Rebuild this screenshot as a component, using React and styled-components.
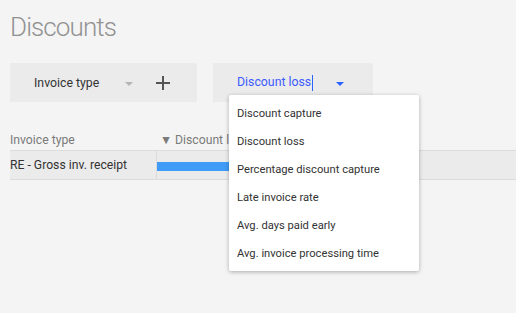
import React, { useState } from 'react'
import styled, { createGlobalStyle } from 'styled-components'

const GlobalStyle = createGlobalStyle`
  html, body {
    margin: 0;
    padding: 0;
    background: #f4f4f4;
    font-family: Roboto, "Liberation Sans", Arial, sans-serif;
  }
`

const Page = styled.div`
  position: relative;
  min-height: 313px;
  box-sizing: border-box;
  padding: 12px 0 0 10px;
`

const Title = styled.h1`
  margin: 0;
  font-size: 26px;
  font-weight: 300;
  letter-spacing: -0.9px;
  color: #929292;
  line-height: 30px;
`

const Toolbar = styled.div`
  display: flex;
  gap: 16px;
  margin-top: 21px;
`

const Picker = styled.div`
  position: relative;
  display: flex;
  align-items: center;
  box-sizing: border-box;
  width: ${({ $width }) => $width}px;
  height: 39px;
  padding-left: 24px;
  background: #ebebeb;
`

const PickerLabel = styled.span`
  font-size: 12.3px;
  color: ${({ $active }) => ($active ? '#3d5afe' : '#333')};
  width: ${({ $labelWidth }) => $labelWidth}px;
`

const Caret = styled.span`
  display: inline-block;
  width: 1px;
  height: 16px;
  background: #2962ff;
  vertical-align: middle;
  margin-left: 1px;
`

const Arrow = styled.span`
  width: 0;
  height: 0;
  border-left: 4px solid transparent;
  border-right: 4px solid transparent;
  border-top: 4px solid ${({ $color }) => $color};
  margin-top: 2px;
`

const AddButton = styled.button`
  display: flex;
  align-items: center;
  justify-content: center;
  width: 18px;
  height: 18px;
  margin-left: 21px;
  padding: 0;
  border: none;
  background: transparent;
  cursor: pointer;
`

const Menu = styled.ul`
  position: absolute;
  left: 229px;
  top: 95px;
  width: 190px;
  margin: 0;
  padding: 4px 0;
  list-style: none;
  background: #fff;
  border-radius: 2px;
  box-shadow: 0 1px 4px rgba(0, 0, 0, 0.3);
  z-index: 2;
`

const MenuItem = styled.li`
  height: 28px;
  line-height: 29px;
  padding-left: 8px;
  font-size: 11.2px;
  color: #333;
  cursor: pointer;
`

const Table = styled.div`
  margin-top: 28px;
`

const HeaderRow = styled.div`
  display: grid;
  grid-template-columns: 146px 1fr;
  height: 20px;
  align-items: center;
  font-size: 12.2px;
  color: #7a7a7a;
`

const HeaderCell = styled.div`
  padding-left: ${({ $pad }) => $pad}px;
  white-space: nowrap;
`

const Row = styled.div`
  display: grid;
  grid-template-columns: 146px 1fr;
  height: 30px;
  background: #ebebeb;
  border-top: 1px solid #dcdcdc;
  border-bottom: 1px solid #dcdcdc;
  box-sizing: border-box;
`

const Cell = styled.div`
  display: flex;
  align-items: center;
  font-size: 12.2px;
  color: #333;
  & + & {
    border-left: 1px solid #dcdcdc;
  }
`

const Bar = styled.div`
  height: 9px;
  margin-top: 2px;
  background: #409bf7;
`

const options = [
  'Discount capture',
  'Discount loss',
  'Percentage discount capture',
  'Late invoice rate',
  'Avg. days paid early',
  'Avg. invoice processing time',
]

const App = () => {
  const [measure, setMeasure] = useState('Discount loss')

  return (
    <Page>
      <GlobalStyle />
      <Title>Discounts</Title>
      <Toolbar>
        <Picker $width={187}>
          <PickerLabel $labelWidth={91}>Invoice type</PickerLabel>
          <Arrow $color="#b5b5b5" />
          <AddButton aria-label="Add">
            <svg width="14" height="14" viewBox="0 0 14 14">
              <path d="M7 0v14M0 7h14" stroke="#555" strokeWidth="2" />
            </svg>
          </AddButton>
        </Picker>
        <Picker $width={160}>
          <PickerLabel $active $labelWidth={99}>
            {measure}
            <Caret />
          </PickerLabel>
          <Arrow $color="#2962ff" />
        </Picker>
      </Toolbar>
      <Menu>
        {options.map((option) => (
          <MenuItem key={option} onClick={() => setMeasure(option)}>
            {option}
          </MenuItem>
        ))}
      </Menu>
      <Table>
        <HeaderRow>
          <HeaderCell $pad={0}>Invoice type</HeaderCell>
          <HeaderCell $pad={4}>▼ Discount loss</HeaderCell>
        </HeaderRow>
        <Row>
          <Cell>RE - Gross inv. receipt</Cell>
          <Cell>
            <Bar style={{ width: '60%' }} />
          </Cell>
        </Row>
      </Table>
    </Page>
  )
}

export default App
